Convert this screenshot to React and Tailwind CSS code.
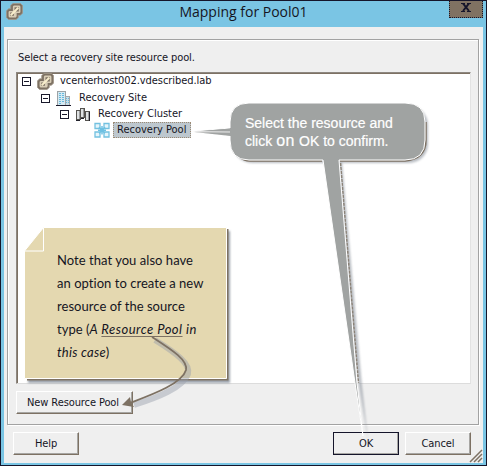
import React from "react";

const ui = "font-['DejaVu_Sans_Condensed','DejaVu_Sans',sans-serif]";

function HostIcon() {
  return (
    <svg width="17" height="17" viewBox="0.6 0.6 15.800 15.800" className="shrink-0" fill="none">
      <path d="M7 1h7l2 2v7l-2 2h-2v2l-2 2H3l-2-2V8l2-2h2V3z" fill="#7d7163" stroke="#a2988a" strokeWidth=".8" />
      <path d="M7.800 3h5.400l.8.800v5.400l-.8.800H10.500v2.800l-.8 1.200H3.800L3 13.200V8.800L3.800 8H7V3.800z" fill="#d8cdb6" />
      <path d="M8.500 4.500h4v4h-2.500L9 7.500 8.500 8zM4.500 9.500h2L8 11v1.500H4.500z" fill="#7d7163" />
      <path d="M5 12l7-7" stroke="#f8eecb" strokeWidth="1.800" />
    </svg>
  );
}

function SiteIcon() {
  return (
    <svg width="16" height="16" viewBox="0 0 16 16" className="shrink-0" shapeRendering="crispEdges">
      <path d="M1 1h9v14H1z" fill="#9da3a6" />
      <path d="M2 2h7v13H2z" fill="#d5e9f2" />
      <path d="M9 6h5v9H9z" fill="#a3a8ab" />
      <path d="M10 7h3v8h-3z" fill="#c9dde6" />
      <path d="M3 3h2v1H3zM6 3h2v1H6zM3 5h2v1H3zM6 5h2v1H6zM3 7h2v1H3zM6 7h2v1H6zM3 9h2v1H3zM6 9h2v1H6zM3 11h2v1H3zM6 11h2v1H6zM3 13h2v1H3zM10 8h1v1h-1zM12 8h1v1h-1zM10 10h1v1h-1zM12 10h1v1h-1zM10 12h1v1h-1zM12 12h1v1h-1z" fill="#66b9dc" />
      <path d="M0 15h15v1H0z" fill="#18182a" />
    </svg>
  );
}

function ClusterIcon() {
  return (
    <svg width="16" height="16" viewBox="0 0 16 16" className="shrink-0" shapeRendering="crispEdges">
      <path d="M1 4h5v10H1zM5 2h5v10H5zM10 5h5v10h-5z" fill="#55534f" />
      <path d="M2 5h2v8H2zM6 3h2v8H6zM11 6h2v8h-2z" fill="#dfe2e3" />
      <path d="M4 5h1v8H4zM8 3h1v8H8zM13 6h1v8h-1z" fill="#9b9c9d" />
      <path d="M1 14h4v1H1zM6 12h3v1H6zM14 6h1v9h-1z" fill="#22222c" />
    </svg>
  );
}

function PoolIcon() {
  return (
    <svg width="16" height="16" viewBox="0 0 16 16" className="shrink-0" fill="none">
      <path d="M1 1.500h5v5H1zM10 1.500h5v5h-5zM1 10h5v5H1zM10 10h5v5h-5z" stroke="#73c1e0" strokeWidth="1.300" fill="#e6f5fb" />
      <path d="M8 4v8.500M4 8.200h8M5 5.200l6 6M11 5.200l-6 6" stroke="#6dc0e2" strokeWidth="1.500" />
    </svg>
  );
}

function Minus() {
  return (
    <span className="flex h-[9px] w-[9px] shrink-0 items-center justify-center border border-[#18182a] bg-white">
      <span className="h-px w-[5px] bg-[#18182a]" />
    </span>
  );
}

function Button({ children, className = "" }) {
  return (
    <button className={`flex h-[23px] items-center justify-center border border-t-white border-l-white border-r-[#7d7163] border-b-[#7d7163] bg-[#efefef] text-[11px] leading-none tracking-[-0.100px] whitespace-nowrap shadow-[inset_-1px_-1px_0_#a7a6a3] ${className}`}>
      {children}
    </button>
  );
}

export default function App() {
  return (
    <div className={`relative flex h-[466px] w-[487px] flex-col overflow-hidden border border-[#15152a] bg-[#7ac5e4] px-[3px] pb-[2px] text-[#15151f] ${ui}`}>
      <header className="flex h-[26px] shrink-0 items-start">
        <div className="w-[120px] pt-[2px] pl-[2px]"><HostIcon /></div>
        <h1 className="w-[239px] pt-[1px] text-center text-[14px] leading-[20px] whitespace-nowrap" style={{ fontFamily: "'Open Sans', 'Noto Sans', sans-serif" }}>Mapping for Pool01</h1>
        <div className="flex flex-1 justify-end">
          <button className="flex h-[17px] w-[34px] items-center justify-center border border-t-0 border-dotted border-[#15152a] bg-[#807262]">
            <svg width="10" height="9" viewBox="0 0 10 9" className="-mt-[3px]" fill="none" stroke="#15152a"><path d="M2 .5l6 7.500M8 .5L2 8" strokeWidth="2" /><path d="M0 .5h4M6 .5h4M0 8.500h4M6 8.500h4" /></svg>
          </button>
        </div>
      </header>
      <main className="flex min-h-0 flex-1 flex-col bg-[#efefef] px-[3px] pt-3">
        <section className="flex h-[386px] w-[472px] flex-col border border-[#a2a2a2] px-2 shadow-[inset_1px_1px_0_white,1px_1px_0_white]">
          <p className="h-[32px] pt-[10px] pl-[2px] text-[11px] leading-[15px] tracking-[-0.100px]">Select a recovery site resource pool.</p>
          <div className="h-[312px] w-[455px] border border-t-[#8d8780] border-l-[#8d8780] border-r-[#e3e3e3] border-b-[#dcdcdc] bg-white text-[11px] shadow-[inset_1px_1px_0_#7d7163]">
            <div className="flex h-[17px] items-center pl-[5px]"><Minus /><span className="w-[6px]" /><HostIcon /><span className="pl-[6px] tracking-[-0.070px]">vcenterhost002.vdescribed.lab</span></div>
            <div className="flex h-4 items-center pl-[24px]"><Minus /><span className="w-[6px]" /><SiteIcon /><span className="pl-[7px]">Recovery Site</span></div>
            <div className="flex h-4 items-center pl-[43px]"><Minus /><span className="w-[6px]" /><ClusterIcon /><span className="pl-[7px]">Recovery Cluster</span></div>
            <div className="flex h-4 items-center pl-[77px]"><PoolIcon /><span className="ml-[3px] h-4 w-[78px] border border-dotted border-[#9b8a75] bg-[#bdc7ce] pl-[3px] leading-[13px] whitespace-nowrap">Recovery Pool</span></div>
          </div>
          <div className="pt-[7px]"><Button className="w-[117px] pr-[3px]">New Resource Pool</Button></div>
        </section>
        <footer className="flex pt-[7px] pl-[6px]">
          <Button className="w-[66px]">Help</Button>
          <span className="w-[254px]" />
          <Button className="w-[66px] outline outline-1 -outline-offset-1 outline-[#15152a]">OK</Button>
          <span className="w-[6px]" />
          <Button className="w-[66px]">Cancel</Button>
        </footer>
      </main>

      <div className="absolute top-[226px] left-[23px] h-[152px] w-[203px]">
        <svg width="211" height="160" viewBox="0 0 211 160" className="absolute top-0 left-0">
          <path d="M4 152h199V4h3v152H4z" fill="#9ca3ac" style={{ filter: "blur(1.200px)" }} />
          <path d="M3 152.500h200.500V2" fill="none" stroke="#7d7163" strokeWidth="2" />
          <path d="M.5 24L19.500.5h183v151H.5z" fill="#e4d8b0" stroke="white" />
          <path d="M19.500 1v23H1" fill="none" stroke="white" />
        </svg>
        <p className="relative pt-[22px] pl-[33px] font-[Lato,sans-serif] text-[13px] leading-[23px] tracking-[0.040px] whitespace-nowrap">
          Note that you also have<br />an option to create a new<br />resource of the source<br />type (<i className="tracking-[0.480px]">A <span className="underline decoration-[#7d7163] underline-offset-2">Resource Pool</span> in</i><br /><i className="tracking-[0.250px]">this case</i>)
        </p>
      </div>
      <svg width="487" height="466" viewBox="0 0 487 466" className="pointer-events-none absolute -top-px -left-px" fill="none">
        <path d="M155 340C176 353 191 364 188 374C183 388 156 398 134 405" stroke="#969eaa" strokeWidth="6" opacity=".45" />
        <path d="M152 337C172 350 188 360 186 370C182 384 151 395 130 403" stroke="#7d7163" strokeWidth="1.800" />
        <path d="M122 405l8-8 1 5 3 5z" fill="#7d7163" />
        <g transform="translate(3 3)" fill="#8b929c" opacity=".6" style={{ filter: "blur(1px)" }}>
          <rect x="230" y="103" width="195" height="57" rx="19" /><path d="M323 159h16l20 224 6 55-9-55z" />
        </g>
        <path d="M233 146Q238 161 250 161H322M340 161H405Q426 159 426 140V122" stroke="#7d7163" strokeWidth="1.500" />
        <path d="M340.500 163L358.500 383" stroke="#8b8277" strokeWidth="1.500" strokeDasharray="3 1" />
        <path d="M249 103H405Q425 103 425 122V140Q425 160 405 160H339L357 383L363 436L355 383L323 160H249Q230 160 230 140V136L191 131.500L230 128V122Q230 103 249 103Z" fill="#a0a3a2" stroke="white" strokeLinejoin="round" />
        <path d="M194 131.500L231 128.500V130.500ZM194 132L231 133V136Z" fill="#a0a3a2" />
        <path d="M196 131.700L230 132" stroke="#eeeeee" strokeWidth="1" />
      </svg>
      <p className="absolute top-[113px] left-[244px] text-[14px] leading-[18px] whitespace-nowrap text-white [-webkit-text-stroke:0.2px_white]" style={{ fontFamily: "'Liberation Sans', sans-serif" }}>Select the resource and<br />click <span className="text-[16px] leading-none tracking-[0.600px]">on</span> OK to confirm.</p>
      <svg width="14" height="14" viewBox="0 0 14 14" className="absolute right-[3px] bottom-[2px]" fill="none"><path d="M1 13L13 1M5 13l8-8M9 13l4-4" stroke="#7d7163" strokeWidth="1.500" /></svg>
    </div>
  );
}
